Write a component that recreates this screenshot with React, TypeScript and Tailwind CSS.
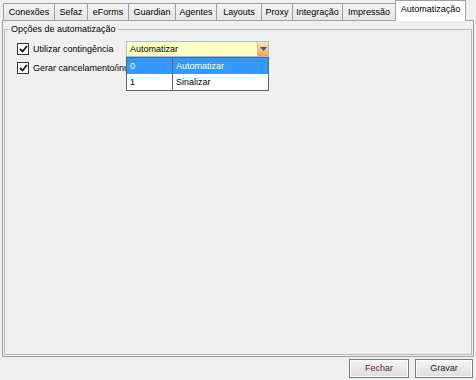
const tabs = [
  { label: "Conexões", w: 52 },
  { label: "Sefaz", w: 34 },
  { label: "eForms", w: 42 },
  { label: "Guardian", w: 48 },
  { label: "Agentes", w: 42 },
  { label: "Layouts", w: 46 },
  { label: "Proxy", w: 32 },
  { label: "Integração", w: 51 },
  { label: "Impressão", w: 54 },
];

function CheckBox() {
  return (
    <div className="w-[12px] h-[12px] shrink-0 border border-[#333] bg-white flex items-center justify-center">
      <svg width="9" height="8" viewBox="0 0 9 8">
        <path d="M1 4L3.5 6.5L8 1" fill="none" stroke="#1a1a1a" strokeWidth="1.8" />
      </svg>
    </div>
  );
}

export default function App() {
  return (
    <div className="w-[476px] h-[380px] bg-[#f0f0f0] text-[9px] text-black font-['Liberation_Sans',sans-serif] flex flex-col overflow-hidden">
      {/* abas */}
      <div className="flex items-end h-[20px] pl-[3px] relative z-10">
        {tabs.map((t) => (
          <div
            key={t.label}
            style={{ width: t.w }}
            className="h-[17px] border border-[#a0a0a0] border-b-0 -ml-px first:ml-0 bg-gradient-to-b from-[#f3f3f3] to-[#e6e6e6] flex items-center justify-center leading-none"
          >
            {t.label}
          </div>
        ))}
        <div className="w-[71px] h-[21px] -mb-px border border-[#a0a0a0] border-b-0 -ml-px bg-white flex items-start justify-center pt-[4px] leading-none">
          Automatização
        </div>
      </div>

      {/* painel */}
      <div className="ml-[2px] mr-[2px] h-[337px] border border-[#a0a0a0] bg-[#f0f0f0] flex flex-col pt-[2px] pl-px pr-px pb-px">
        <div className="flex items-center h-[12px] leading-none">
          <div className="w-[5px] border-t border-[#b9b9b9]" />
          <span className="px-[2px]">Opções de automatização</span>
          <div className="flex-1 border-t border-[#b9b9b9]" />
        </div>
        <div className="flex-1 -mt-[6px] border border-t-0 border-[#b9b9b9] pt-[12px] pl-[12px]">
          <div className="flex items-start">
            <div className="w-[109px] overflow-hidden flex flex-col gap-[7px] pt-[2px]">
              <div className="flex items-center gap-[4px] h-[12px] leading-none">
                <CheckBox />
                <span>Utilizar contingência</span>
              </div>
              <div className="flex items-center gap-[4px] h-[12px] leading-none whitespace-nowrap">
                <CheckBox />
                <span>Gerar cancelamento/inut</span>
              </div>
            </div>

            {/* combo aberto */}
            <div className="w-[143px] relative z-10">
              <div className="h-[16px] border border-[#a8bdd4] bg-[#ffffc4] flex">
                <div className="flex-1 pl-[3px] flex items-center leading-none">Automatizar</div>
                <div className="w-[11px] h-full bg-gradient-to-b from-[#fde8c8] via-[#fbc57f] to-[#f5a54d] border-l border-[#d9b68c] flex items-center justify-center">
                  <svg width="7" height="4" viewBox="0 0 7 4">
                    <path d="M0 0H7L3.5 4Z" fill="#2f5d9e" />
                  </svg>
                </div>
              </div>
              <div className="border border-[#646464] bg-white">
                <div className="flex h-[16px] bg-[#3399ff] text-white leading-none">
                  <div className="w-[46px] border-r border-[#646464] pl-[3px] flex items-center">0</div>
                  <div className="flex-1 pl-[3px] flex items-center">Automatizar</div>
                </div>
                <div className="flex h-[16px] leading-none">
                  <div className="w-[46px] border-r border-[#646464] pl-[3px] flex items-center">1</div>
                  <div className="flex-1 pl-[3px] flex items-center">Sinalizar</div>
                </div>
              </div>
            </div>
          </div>
        </div>
      </div>

      {/* botões */}
      <div className="flex justify-end gap-[6px] pr-[3px] pt-[2px]">
        <button className="w-[60px] h-[19px] border border-[#7a7a7a] bg-gradient-to-b from-[#f4f4f4] to-[#dedede] shadow-[inset_0_0_0_1px_#fbfbfb] leading-none text-[#6b1d1d]">
          Fechar
        </button>
        <button className="w-[58px] h-[19px] border border-[#7a7a7a] bg-gradient-to-b from-[#f4f4f4] to-[#dedede] shadow-[inset_0_0_0_1px_#fbfbfb] leading-none text-[#222]">
          Gravar
        </button>
      </div>
    </div>
  );
}
